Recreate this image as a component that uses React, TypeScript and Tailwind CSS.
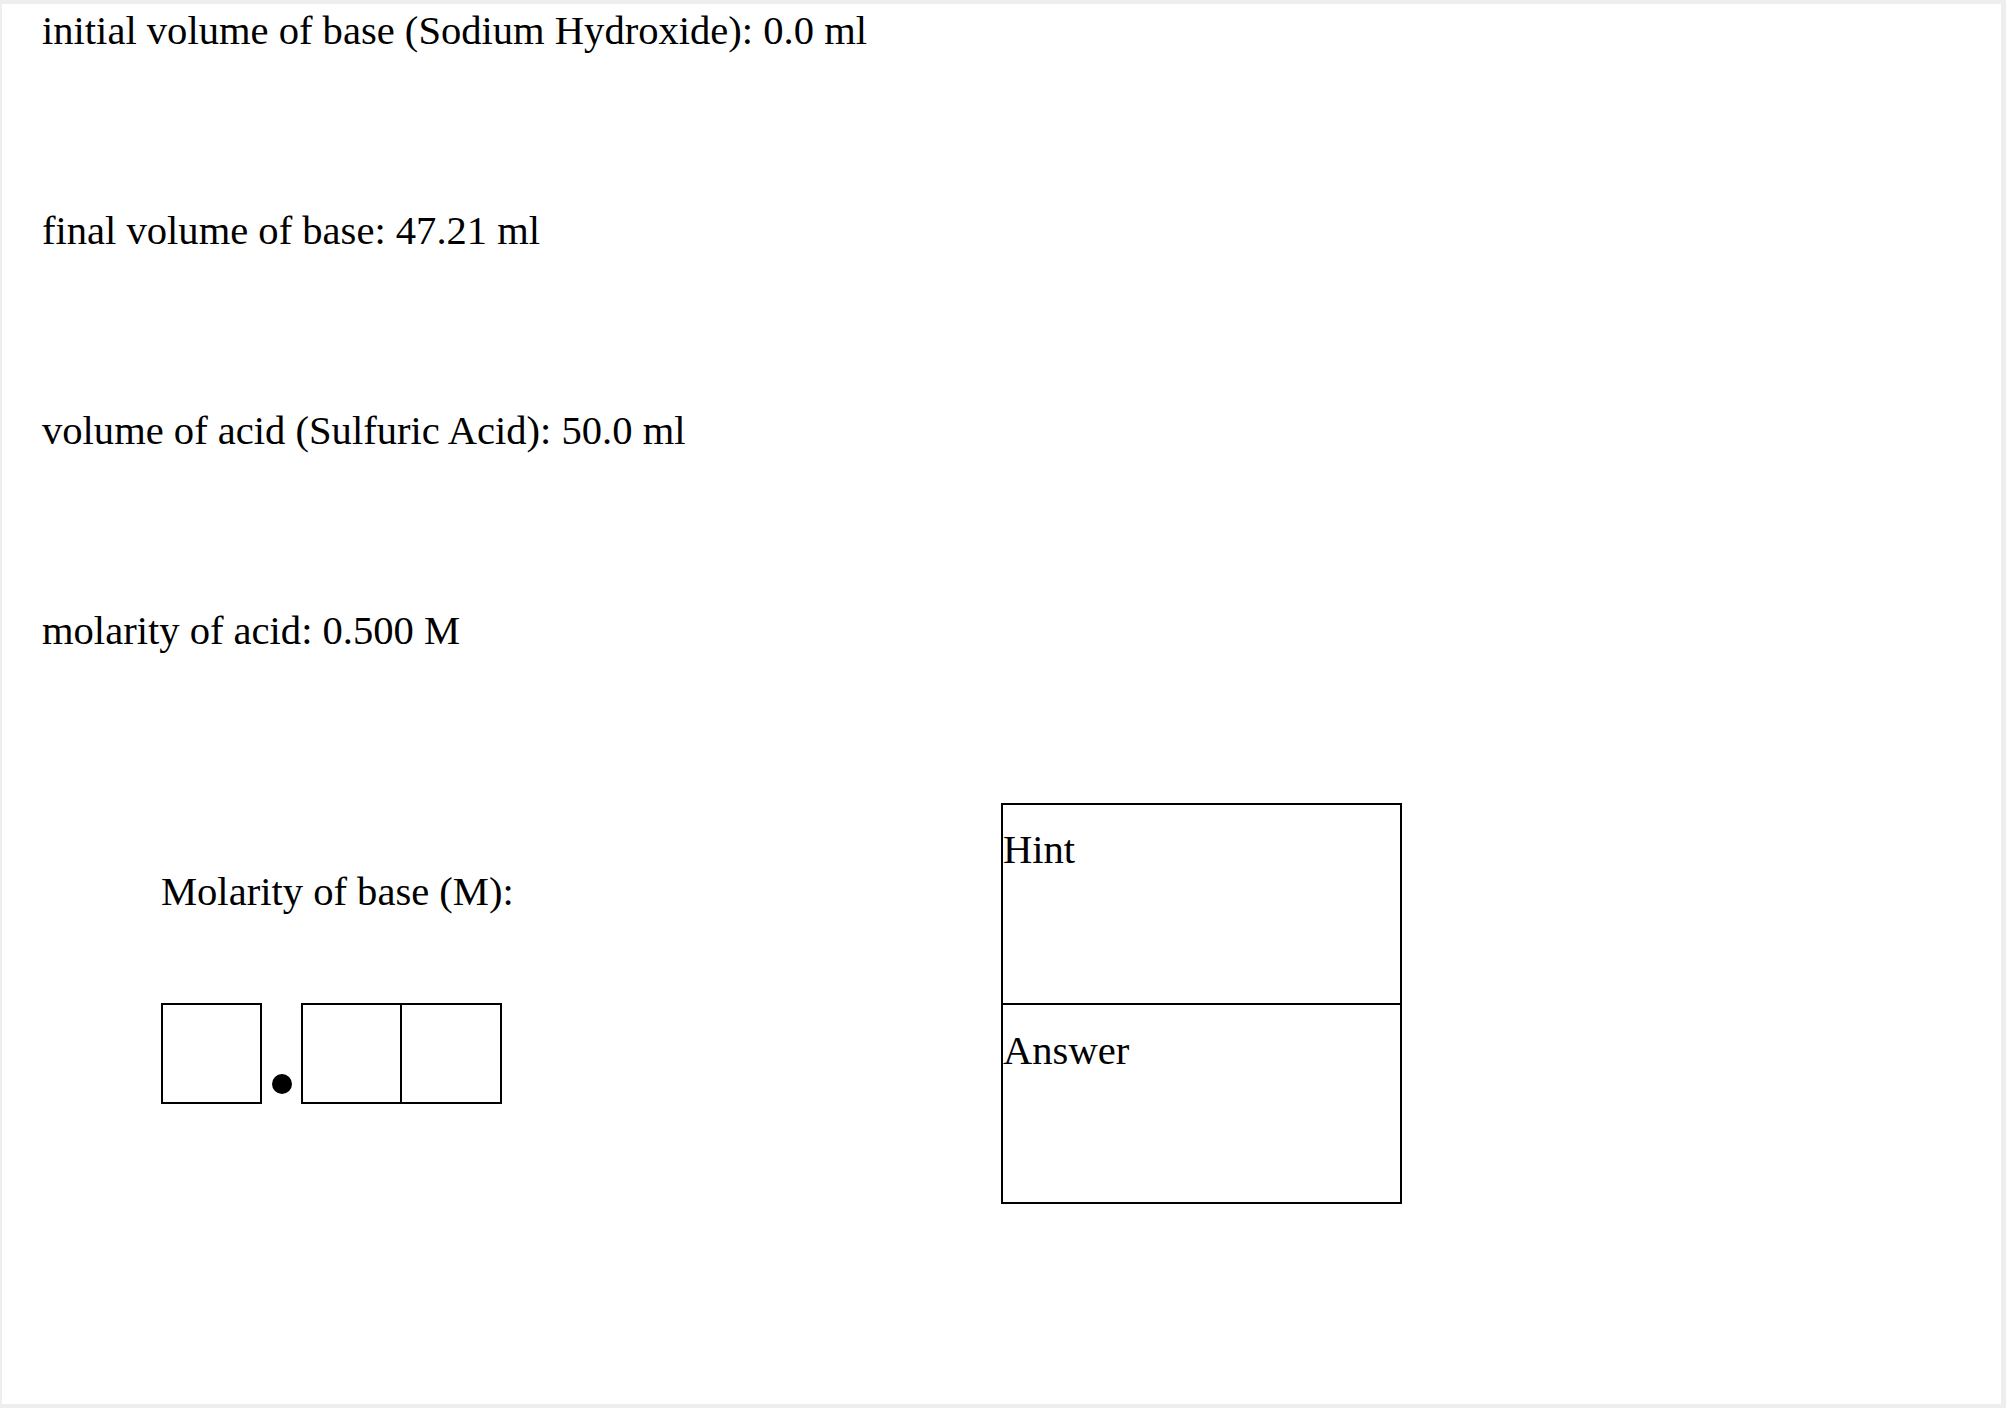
import React from "react";

export default function App() {
  const lines = [
    "initial volume of base (Sodium Hydroxide): 0.0 ml",
    "final volume of base: 47.21 ml",
    "volume of acid (Sulfuric Acid): 50.0 ml",
    "molarity of acid: 0.500 M",
  ];
  return (
    <div className="w-[2006px] h-[1408px] bg-[#eeeeee] pt-[4px] pl-[2px] pr-[5px] pb-[4px] font-['Liberation_Serif','Times_New_Roman',serif] text-black text-[40.6px] leading-[46px]">
      <div className="w-full h-full bg-white flex flex-col">
        <div className="pt-[4px] pl-[40px] flex flex-col">
          {lines.map((l) => (
            <div key={l} className="h-[200px]">
              <span className="whitespace-nowrap">{l}</span>
            </div>
          ))}
        </div>
        <div className="flex flex-row pl-[159px] -mt-[5px]">
          <div className="w-[840px] flex flex-col pt-[66px]">
            <div className="h-[46px] whitespace-nowrap">Molarity of base (M):</div>
            <div className="mt-[88px] flex flex-row items-end">
              <div className="w-[101px] h-[101px] border-2 border-black" />
              <div className="ml-[10px] mr-[9px] mb-[10px] w-[20px] h-[20px] rounded-full bg-black" />
              <div className="w-[101px] h-[101px] border-2 border-black" />
              <div className="w-[100px] h-[101px] border-2 border-l-0 border-black" />
            </div>
          </div>
          <div className="w-[401px] border-2 border-black flex flex-col">
            <div className="h-[200px] border-b-2 border-black pt-[22px]">Hint</div>
            <div className="h-[197px] pt-[23px]">Answer</div>
          </div>
        </div>
      </div>
    </div>
  );
}
